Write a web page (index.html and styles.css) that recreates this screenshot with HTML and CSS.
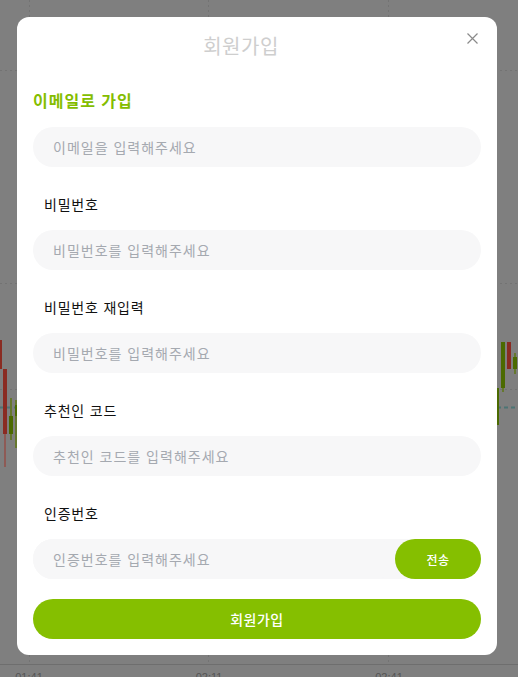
FILE: index.html
```html
<!DOCTYPE html>
<html lang="ko">
<head>
  <meta charset="utf-8">
  <title>회원가입</title>
  <link rel="stylesheet" href="styles.css">
</head>
<body>
  <svg class="chart" width="518" height="677" viewBox="0 0 518 677">
    <g stroke="#737373" stroke-width="1" stroke-dasharray="2 3">
      <line x1="29.5" y1="0" x2="29.5" y2="664" />
      <line x1="208.5" y1="0" x2="208.5" y2="664" />
      <line x1="388.5" y1="0" x2="388.5" y2="664" />
      <line x1="0" y1="70.5" x2="518" y2="70.5" />
      <line x1="0" y1="283.5" x2="518" y2="283.5" />
      <line x1="0" y1="389.5" x2="518" y2="389.5" />
    </g>
    <line x1="0" y1="407.5" x2="518" y2="407.5" stroke="#4c7474" stroke-width="2" stroke-dasharray="4 3" />
    <line x1="0" y1="664.5" x2="518" y2="664.5" stroke="#6e6e6e" />
    <!-- left candles -->
    <rect x="0" y="340" width="2" height="29" fill="#8a2b22" />
    <rect x="4" y="434" width="2" height="33" fill="#8e5a55" />
    <rect x="3" y="369" width="4" height="65" fill="#8a2b22" />
    <rect x="10" y="398" width="2" height="42" fill="#66782e" />
    <rect x="9" y="416" width="4" height="18" fill="#4b6a00" />
    <rect x="15" y="400" width="2" height="48" fill="#66782e" />
    <rect x="15" y="405" width="3" height="11" fill="#4b6a00" />
    <!-- right candles -->
    <rect x="497" y="388" width="2" height="37" fill="#4b6a00" />
    <rect x="502" y="388" width="2" height="4" fill="#66782e" />
    <rect x="501" y="342" width="4" height="46" fill="#4b6a00" />
    <rect x="507" y="342" width="4" height="27" fill="#8a2b22" />
    <rect x="514" y="353" width="2" height="21" fill="#66782e" />
    <rect x="513" y="357" width="4" height="12" fill="#4b6a00" />
    <g fill="#555" font-family="Liberation Sans, sans-serif" font-size="11">
      <text x="29" y="681" text-anchor="middle">01:41</text>
      <text x="209" y="681" text-anchor="middle">02:11</text>
      <text x="389" y="681" text-anchor="middle">02:41</text>
    </g>
  </svg>

  <div class="overlay">
    <div class="modal">
      <h2 class="modal-title">회원가입</h2>
      <button class="close-btn" aria-label="닫기">
        <svg width="11" height="11" viewBox="0 0 11 11">
          <path d="M0.5 0.5L10.5 10.5M10.5 0.5L0.5 10.5" stroke="#8a8a8a" stroke-width="1.2" fill="none" />
        </svg>
      </button>

      <h3 class="section-title">이메일로 가입</h3>
      <input class="field" type="email" placeholder="이메일을 입력해주세요">

      <label class="field-label">비밀번호</label>
      <input class="field" type="password" placeholder="비밀번호를 입력해주세요">

      <label class="field-label">비밀번호 재입력</label>
      <input class="field" type="password" placeholder="비밀번호를 입력해주세요">

      <label class="field-label">추천인 코드</label>
      <input class="field" type="text" placeholder="추천인 코드를 입력해주세요">

      <label class="field-label">인증번호</label>
      <div class="field-row">
        <input class="field field-inline" type="text" placeholder="인증번호를 입력해주세요">
        <button class="send-btn">전송</button>
      </div>

      <button class="submit-btn">회원가입</button>
    </div>
  </div>
</body>
</html>
```

FILE: styles.css
```css
html,
body {
  margin: 0;
  padding: 0;
  height: 100%;
  overflow: hidden;
}
body {
  position: relative;
  background-color: #7f7f7f;
  font-family: "Noto Sans CJK KR", "Noto Sans", sans-serif;
}
.chart {
  position: absolute;
  top: 0;
  left: 0;
}
.overlay {
  position: absolute;
  top: 0;
  left: 0;
  right: 0;
  bottom: 0;
  padding: 17px 0 0 17px;
}
.modal {
  position: relative;
  width: 480px;
  box-sizing: border-box;
  padding: 15px 16px 16px;
  background-color: #fff;
  border-radius: 12px;
  display: flex;
  flex-direction: column;
}
.modal-title {
  margin: 0;
  padding-right: 32px;
  font-size: 20px;
  line-height: 28px;
  font-weight: 400;
  letter-spacing: 0.5px;
  color: #cecece;
  text-align: center;
}
.close-btn {
  position: absolute;
  top: 16px;
  right: 19px;
  width: 11px;
  height: 11px;
  padding: 0;
  border: none;
  background: none;
  display: flex;
}
.section-title {
  margin: 28px 0 15px;
  font-size: 16px;
  line-height: 24px;
  font-weight: 700;
  letter-spacing: 1px;
  color: #84bd00;
}
.field-label {
  margin: 27px 0 16px;
  padding-left: 11px;
  font-size: 14px;
  line-height: 20px;
  letter-spacing: 0.8px;
  color: #111;
}
.field {
  height: 40px;
  box-sizing: border-box;
  padding: 0 20px;
  border: none;
  border-radius: 20px;
  background-color: #f7f7f8;
  font-family: inherit;
  font-size: 14px;
  letter-spacing: 1px;
  color: #333;
  outline: none;
}
.field::placeholder {
  color: #a5a9b0;
}
.field-row {
  display: flex;
  height: 40px;
  border-radius: 20px;
  background-color: #f7f7f8;
}
.field-inline {
  flex: 1;
  min-width: 0;
}
.send-btn {
  width: 86px;
  height: 40px;
  border: none;
  border-radius: 20px;
  background-color: #85bf00;
  color: #fff;
  font-family: inherit;
  font-size: 12px;
  font-weight: 500;
  letter-spacing: 0.5px;
}
.submit-btn {
  margin-top: 20px;
  height: 40px;
  border: none;
  border-radius: 20px;
  background-color: #85bf00;
  color: #fff;
  font-family: inherit;
  font-size: 14px;
  font-weight: 500;
  letter-spacing: 0.5px;
}
```
